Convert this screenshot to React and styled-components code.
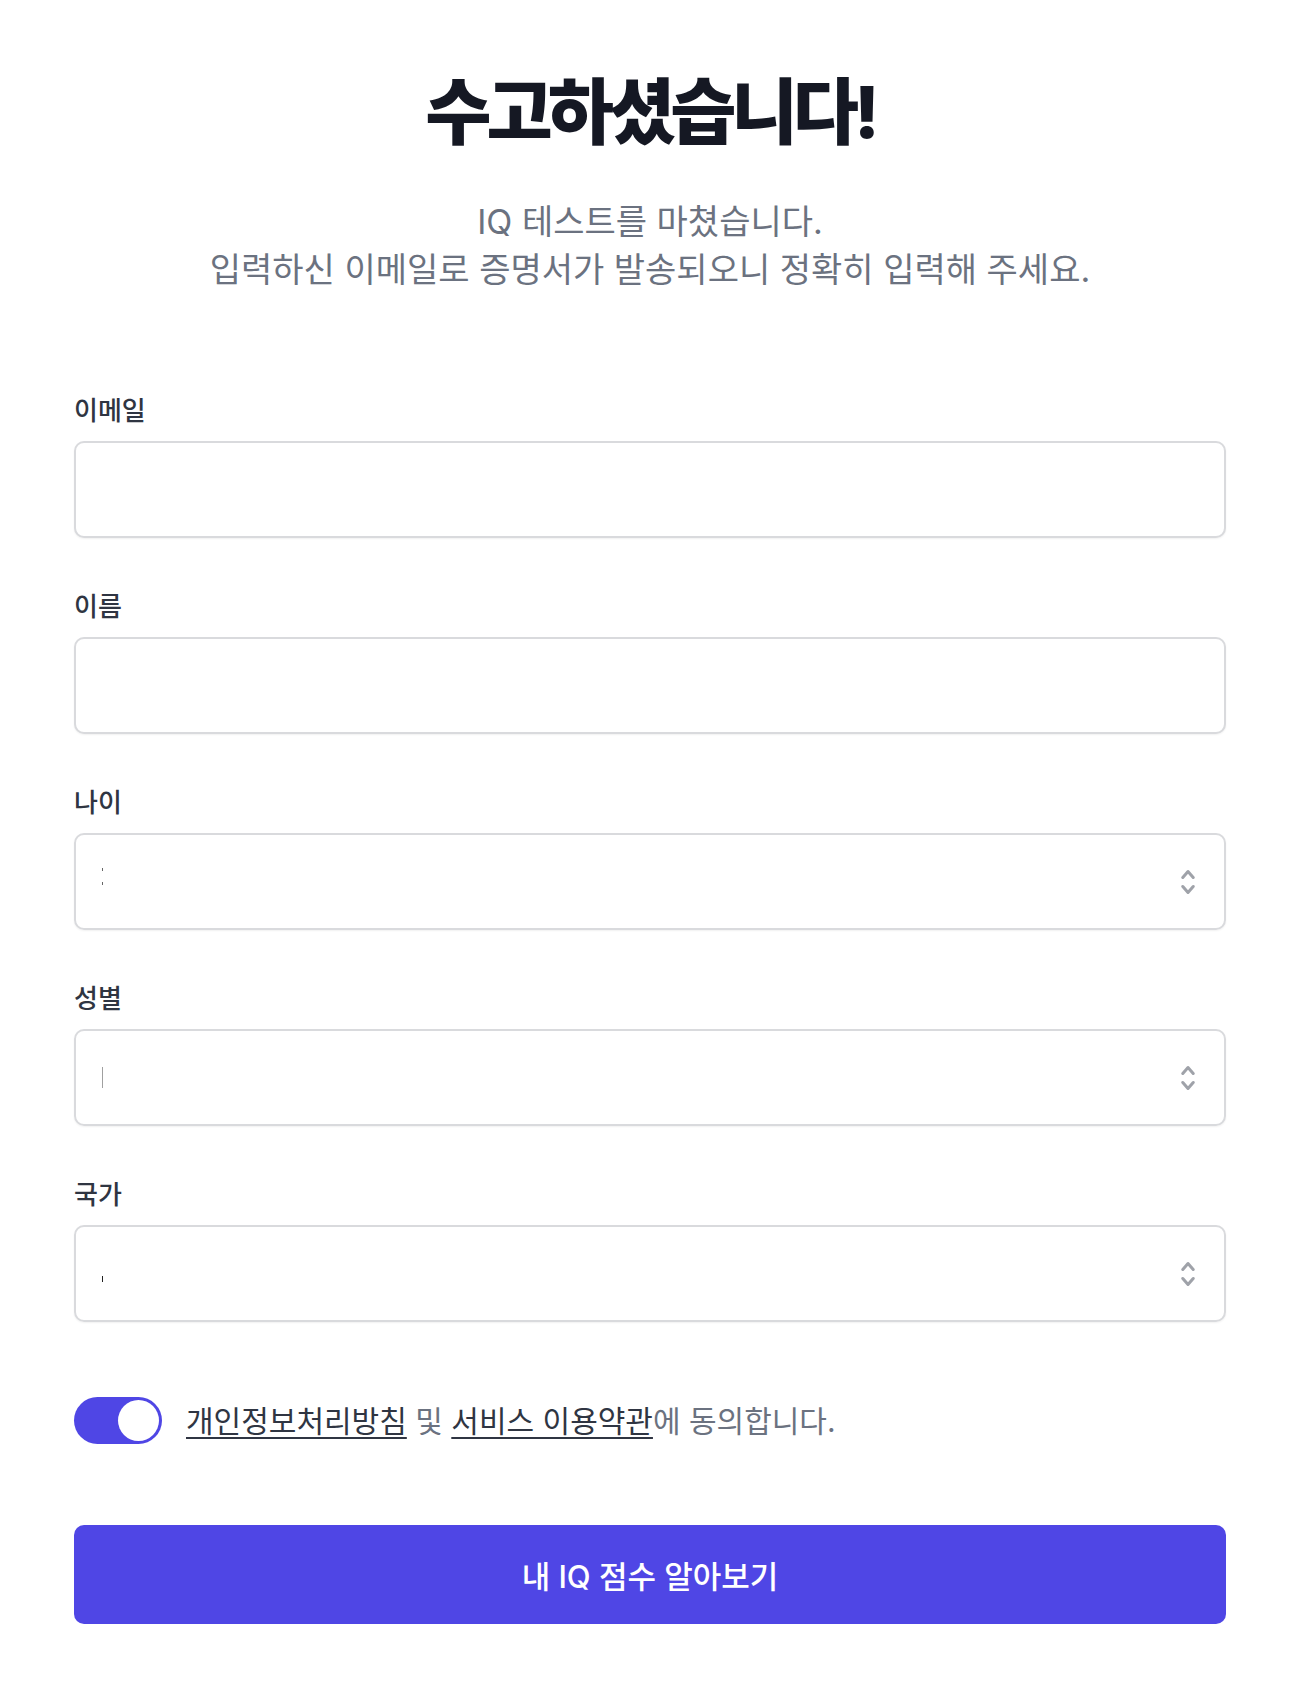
import React, { useState } from 'react';
import styled, { createGlobalStyle } from 'styled-components';

const GlobalStyle = createGlobalStyle`
    body {
        margin: 0;
        background: #ffffff;
        font-family: Inter, "Noto Sans CJK KR", sans-serif;
    }
`;

const Page = styled.main`
    padding: 67px 78px 68px 74px;
`;

const Title = styled.h1`
    margin: 0;
    text-align: center;
    font-size: 72px;
    line-height: 90px;
    font-weight: 800;
    letter-spacing: -5px;
    color: #151823;
`;

const Subtitle = styled.p`
    margin: 41px 0 0;
    text-align: center;
    font-size: 34px;
    line-height: 48px;
    color: #6b7280;
`;

const Form = styled.form`
    margin-top: 101px;
    display: flex;
    flex-direction: column;
    gap: 53px;
`;

const Field = styled.div`
    display: flex;
    flex-direction: column;
    gap: 14px;
`;

const Label = styled.label`
    font-size: 26px;
    line-height: 32px;
    font-weight: 500;
    color: #2f3542;
`;

const Input = styled.input`
    box-sizing: border-box;
    height: 97px;
    width: 100%;
    border: 2px solid #d9dadd;
    border-radius: 10px;
    box-shadow: 0 1px 2px rgba(0, 0, 0, 0.06);
    padding: 0 26px;
    font-size: 28px;
    font-family: inherit;
    outline: none;
`;

const SelectBox = styled.div`
    box-sizing: border-box;
    height: 97px;
    display: flex;
    align-items: center;
    justify-content: space-between;
    border: 2px solid #d9dadd;
    border-radius: 10px;
    box-shadow: 0 1px 2px rgba(0, 0, 0, 0.06);
    padding: 0 29px 0 26px;
`;

const Mark = styled.span`
    display: block;
    width: 1px;
    height: ${p => p.$h}px;
    margin-top: ${p => p.$offset || 0}px;
    background: ${p => p.$dotted
        ? 'repeating-linear-gradient(#666 0 3px, transparent 3px 14px)'
        : p.$color || '#9ca3af'};
`;

const Chevrons = () => (
    <svg width="14" height="30" viewBox="0 0 14 30" fill="none"
         stroke="#9fa2a9" strokeWidth="3" strokeLinecap="round" strokeLinejoin="round">
        <path d="M1.8 10.5 L7 4.5 L12.2 10.5" />
        <path d="M1.8 19.5 L7 25.5 L12.2 19.5" />
    </svg>
);

const AgreeRow = styled.div`
    margin-top: 22px;
    display: flex;
    align-items: center;
    gap: 24px;
`;

const Toggle = styled.button`
    box-sizing: border-box;
    width: 88px;
    height: 47px;
    padding: 3px;
    border: none;
    border-radius: 24px;
    background: ${p => (p.$on ? '#4f46e5' : '#e5e7eb')};
    display: flex;
    justify-content: ${p => (p.$on ? 'flex-end' : 'flex-start')};
    cursor: pointer;
`;

const Knob = styled.span`
    width: 41px;
    height: 41px;
    border-radius: 50%;
    background: #ffffff;
`;

const AgreeText = styled.span`
    font-size: 30px;
    line-height: 40px;
    color: #6b7280;
`;

const TermLink = styled.a`
    color: #2f3542;
    text-decoration: underline;
    text-decoration-thickness: 2px;
    text-underline-offset: 5px;
`;

const Submit = styled.button`
    margin-top: 28px;
    height: 99px;
    width: 100%;
    border: none;
    border-radius: 10px;
    background: #4f46e5;
    color: #ffffff;
    font-family: inherit;
    font-size: 31px;
    font-weight: 500;
    cursor: pointer;
`;

const App = () => {
    const [agree, setAgree] = useState(true);

    return (
        <Page>
            <GlobalStyle />
            <Title>수고하셨습니다!</Title>
            <Subtitle>
                IQ 테스트를 마쳤습니다.
                <br />
                입력하신 이메일로 증명서가 발송되오니 정확히 입력해 주세요.
            </Subtitle>
            <Form onSubmit={e => e.preventDefault()}>
                <Field>
                    <Label>이메일</Label>
                    <Input type="email" />
                </Field>
                <Field>
                    <Label>이름</Label>
                    <Input type="text" />
                </Field>
                <Field>
                    <Label>나이</Label>
                    <SelectBox>
                        <Mark $h={20} $dotted $offset={-8} />
                        <Chevrons />
                    </SelectBox>
                </Field>
                <Field>
                    <Label>성별</Label>
                    <SelectBox>
                        <Mark $h={21} $color="#a0a0a0" />
                        <Chevrons />
                    </SelectBox>
                </Field>
                <Field>
                    <Label>국가</Label>
                    <SelectBox>
                        <Mark $h={6} $color="#222" $offset={10} />
                        <Chevrons />
                    </SelectBox>
                </Field>
                <AgreeRow>
                    <Toggle type="button" $on={agree} onClick={() => setAgree(!agree)}>
                        <Knob />
                    </Toggle>
                    <AgreeText>
                        <TermLink href="#">개인정보처리방침</TermLink> 및{' '}
                        <TermLink href="#">서비스 이용약관</TermLink>에 동의합니다.
                    </AgreeText>
                </AgreeRow>
                <Submit type="submit">내 IQ 점수 알아보기</Submit>
            </Form>
        </Page>
    );
};

export default App;
